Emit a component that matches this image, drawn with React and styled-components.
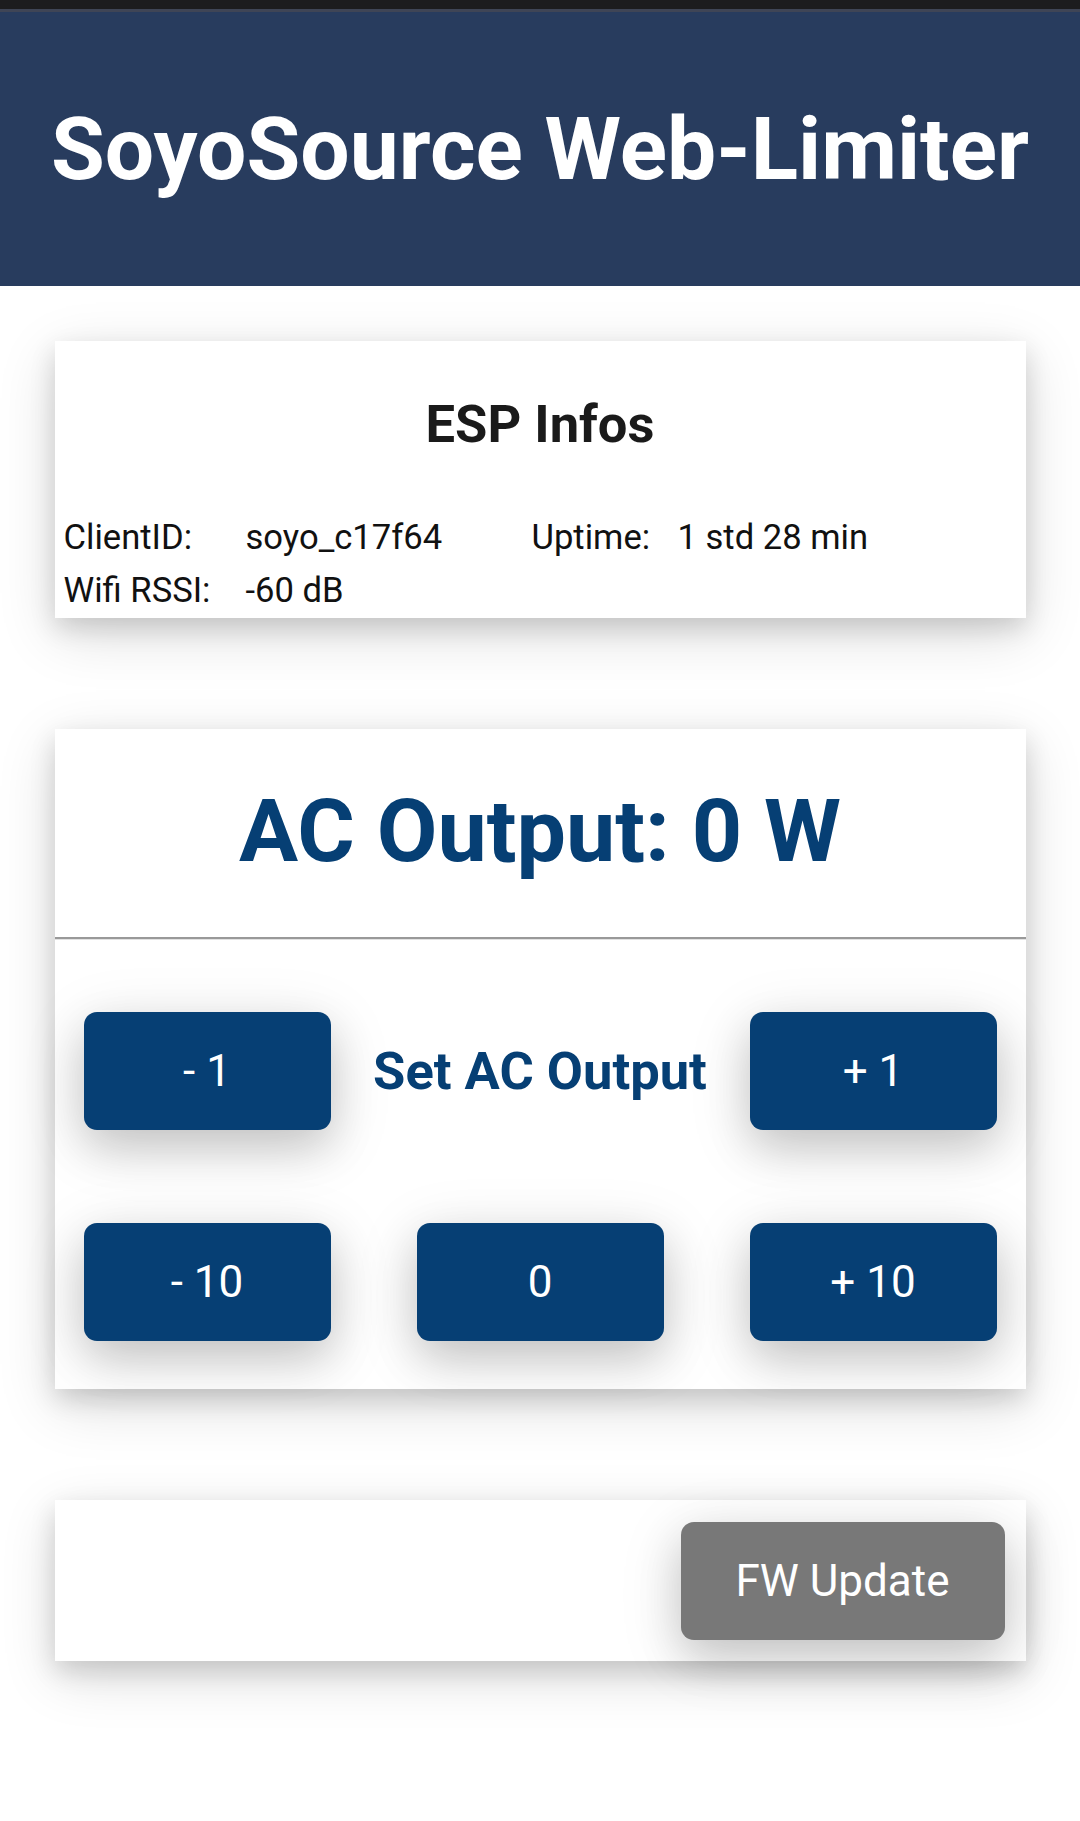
import React from "react";
import styled, { createGlobalStyle } from "styled-components";

const GlobalStyle = createGlobalStyle`
    html, body {
        margin: 0;
        padding: 0;
        background: #fff;
        font-family: Roboto, "Noto Sans", "Liberation Sans", sans-serif;
    }
`;

const infos = [
    ["ClientID:", "soyo_c17f64", "Uptime:", "1 std 28 min"],
    ["Wifi RSSI:", "-60 dB", "", ""],
];

function App() {
    return (
        <>
        <GlobalStyle />
        <StatusBar />
        <Header>
            <Title>SoyoSource Web-Limiter</Title>
        </Header>
        <Main>
            <Card>
                <InfoHeading>ESP Infos</InfoHeading>
                <InfoGrid>
                    {infos.map((row, i) =>
                        row.map((cell, j) => <InfoCell key={`${i}-${j}`}>{cell}</InfoCell>)
                    )}
                </InfoGrid>
            </Card>

            <Card>
                <OutputTitle>AC Output: 0 W</OutputTitle>
                <Divider />
                <ButtonGrid>
                    <ActionButton>- 1</ActionButton>
                    <SetLabel>Set AC Output</SetLabel>
                    <ActionButton>+ 1</ActionButton>
                    <ActionButton>- 10</ActionButton>
                    <ActionButton>0</ActionButton>
                    <ActionButton>+ 10</ActionButton>
                </ButtonGrid>
            </Card>

            <UpdateCard>
                <ActionButton $gray>FW Update</ActionButton>
            </UpdateCard>
        </Main>
        </>
    );
}

const StatusBar = styled.div`
    height: 9px;
    background: #1c1c1e;
    border-bottom: 3px solid #3f4556;
`;

const Header = styled.header`
    height: 274px;
    background: #283c5e;
    display: flex;
    align-items: center;
    justify-content: center;
`;

const Title = styled.h1`
    margin: 0;
    color: #fff;
    font-size: 87.5px;
    font-weight: 700;
    line-height: 1.2;
    white-space: nowrap;
`;

const Main = styled.main`
    display: flex;
    flex-direction: column;
    align-items: center;
    gap: 111px;
    padding: 55px 0 160px;
`;

const Card = styled.section`
    width: 971px;
    background: #fff;
    box-shadow: 0 10px 24px rgba(0, 0, 0, 0.14), 0 16px 56px rgba(0, 0, 0, 0.14);
`;

const InfoHeading = styled.h2`
    margin: 52px 0 55px;
    text-align: center;
    color: #1a1a1a;
    font-size: 52.5px;
    font-weight: 700;
    line-height: 62px;
`;

const InfoGrid = styled.div`
    display: grid;
    grid-template-columns: 182px 286px 146px auto;
    grid-auto-rows: 53px;
    align-items: center;
    padding: 0 0 2px 9px;
`;

const InfoCell = styled.div`
    color: #111;
    font-size: 34.6px;
    white-space: nowrap;
`;

const OutputTitle = styled.h2`
    margin: 50px 0 54px;
    text-align: center;
    color: #063f74;
    font-size: 88px;
    font-weight: 700;
    line-height: 104px;
`;

const Divider = styled.hr`
    margin: 0;
    border: none;
    border-top: 2px solid #999;
    border-bottom: 1px solid #e2e2e2;
`;

const ButtonGrid = styled.div`
    display: grid;
    grid-template-columns: 247px 1fr 247px;
    grid-auto-rows: 118px;
    row-gap: 93px;
    padding: 72px 29px 48px;
    justify-items: center;
`;

const ActionButton = styled.button`
    width: ${p => (p.$gray ? "324px" : "247px")};
    height: 118px;
    border: none;
    border-radius: 13px;
    background: ${p => (p.$gray ? "#787878" : "#063f74")};
    color: #fff;
    font-family: inherit;
    font-size: 44px;
    font-weight: 400;
    box-shadow: 0 18px 44px rgba(0, 0, 0, 0.15), 0 14px 64px rgba(0, 0, 0, 0.13);
    cursor: pointer;
`;

const SetLabel = styled.div`
    align-self: center;
    color: #063f74;
    font-size: 52.5px;
    font-weight: 700;
    white-space: nowrap;
`;

const UpdateCard = styled(Card)`
    display: flex;
    justify-content: flex-end;
    padding: 22px 21px 21px;
    box-sizing: border-box;
`;

export default App;
